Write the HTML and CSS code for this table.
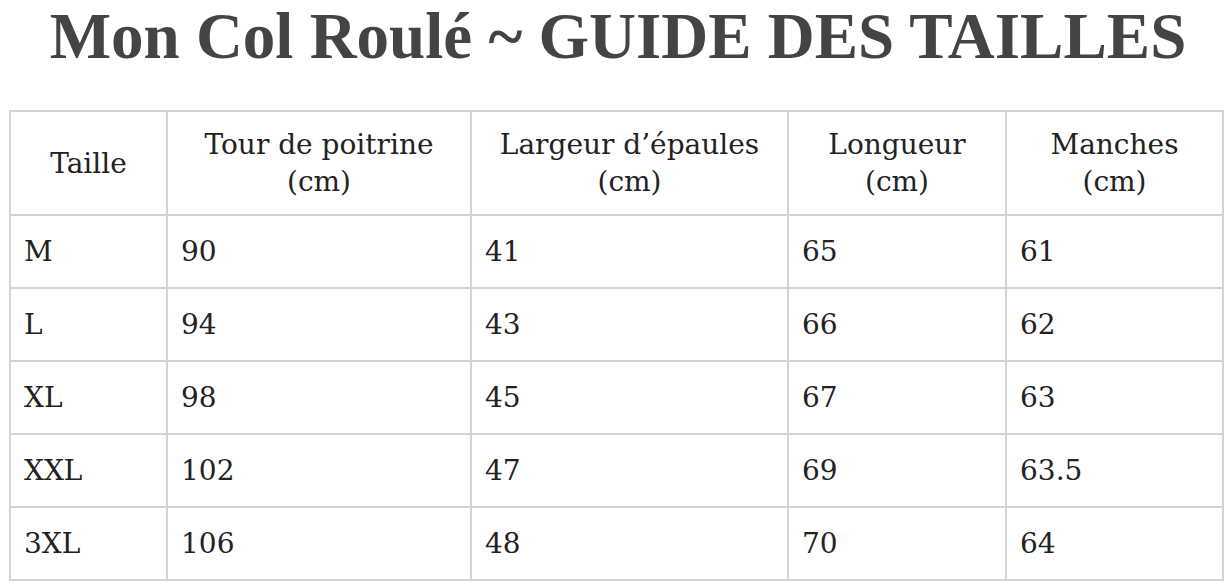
FILE: index.html
```html
<!DOCTYPE html>
<html lang="fr">
<head>
<meta charset="utf-8">
<title>Mon Col Roulé ~ Guide des tailles</title>
<link rel="stylesheet" href="styles.css">
</head>
<body>
<h1 class="title">Mon Col Roulé ~ GUIDE DES TAILLES</h1>
<table class="sizes">
  <colgroup>
    <col class="c1"><col class="c2"><col class="c3"><col class="c4"><col class="c5">
  </colgroup>
  <thead>
    <tr>
      <th>Taille</th>
      <th>Tour de poitrine<br>(cm)</th>
      <th>Largeur d’épaules<br>(cm)</th>
      <th>Longueur<br>(cm)</th>
      <th>Manches<br>(cm)</th>
    </tr>
  </thead>
  <tbody>
    <tr><td>M</td><td>90</td><td>41</td><td>65</td><td>61</td></tr>
    <tr><td>L</td><td>94</td><td>43</td><td>66</td><td>62</td></tr>
    <tr><td>XL</td><td>98</td><td>45</td><td>67</td><td>63</td></tr>
    <tr><td>XXL</td><td>102</td><td>47</td><td>69</td><td>63.5</td></tr>
    <tr><td>3XL</td><td>106</td><td>48</td><td>70</td><td>64</td></tr>
  </tbody>
</table>
</body>
</html>
```
FILE: styles.css
```css
html, body {
  margin: 0;
  padding: 0;
  background: #ffffff;
}
body {
  font-family: "DejaVu Serif", "Liberation Serif", serif;
  color: #222222;
}
.title {
  margin: 0 0 38px 0;
  font-family: "Liberation Serif", serif;
  font-weight: bold;
  font-size: 65px;
  line-height: 72px;
  color: #444444;
  text-align: center;
  padding-left: 4px;
}
.sizes {
  margin-left: 9px;
  width: 1215px;
  border-collapse: collapse;
  table-layout: fixed;
  border: 2px solid #d4d4d4;
}
.c1 { width: 157px; }
.c2 { width: 304px; }
.c3 { width: 317px; }
.c4 { width: 218px; }
.c5 { width: 217px; }
.sizes th, .sizes td {
  border: 2px solid #d4d4d4;
  font-family: "DejaVu Serif", serif;
  font-size: 28px;
  color: #222222;
}
.sizes th {
  height: 102px;
  font-weight: normal;
  text-align: center;
  vertical-align: middle;
  line-height: 37px;
  padding: 0 6px;
}
.sizes td {
  height: 71px;
  padding: 0 13px;
  text-align: left;
  vertical-align: middle;
}
```
